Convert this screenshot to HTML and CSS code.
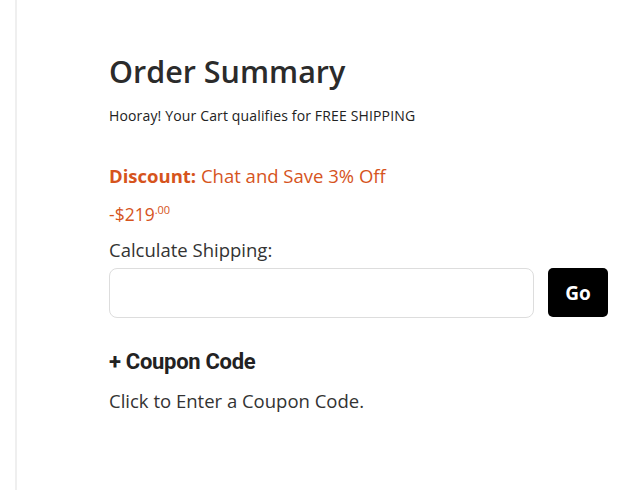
FILE: index.html
```html
<!DOCTYPE html>
<html lang="en">
<head>
  <meta charset="UTF-8">
  <title>Order Summary</title>
  <link rel="stylesheet" href="styles.css">
</head>
<body>

  <div class="summary">
    <h2 class="title">Order Summary</h2>
    <p class="free-ship">Hooray! Your Cart qualifies for FREE SHIPPING</p>

    <p class="discount"><b>Discount:</b> Chat and Save 3% Off</p>
    <p class="discount-amt">-$219<sup>.00</sup></p>

    <label class="ship-label" for="zip">Calculate Shipping:</label>
    <div class="ship-row">
      <input class="ship-input" type="text" id="zip" />
      <button class="go-btn">Go</button>
    </div>

    <div class="coupon-head">+ Coupon Code</div>
    <p class="coupon-text">Click to Enter a Coupon Code.</p>
  </div>

</body>
</html>
```

FILE: styles.css
```css
body { margin: 0; font-family: "Open Sans", Arial, sans-serif; color: #333; background: #fff; }
.summary { margin-left: 15px; border-left: 2px solid #efefef; min-height: 490px; padding: 53px 32px 0 92px; box-sizing: border-box; }
.title { margin: 0; font-size: 30.5px; font-weight: 600; color: #2b2b2b; line-height: 36px; }
.free-ship { margin: 17px 0 0; font-size: 14px; line-height: 20px; color: #222; letter-spacing: 0.15px; }
.discount { margin: 38px 0 0; font-size: 18.5px; line-height: 24px; color: #d6541d; }
.discount b { font-weight: 700; }
.discount-amt { margin: 11px 0 0; font-size: 17.5px; line-height: 22px; color: #d6541d; }
.discount-amt sup { font-size: 11px; }
.ship-label { display: block; margin-top: 13px; font-size: 18.5px; line-height: 24px; color: #333; }
.ship-row { display: flex; gap: 14px; margin-top: 6px; align-items: center; }
.ship-input { flex: 1; height: 50px; box-sizing: border-box; border: 1px solid #ddd; border-radius: 8px; padding: 0 12px; font-size: 16px; }
.go-btn { width: 60px; height: 49px; background: #000; color: #fff; border: none; border-radius: 5px; font-family: "Open Sans", Arial, sans-serif; font-weight: 700; font-size: 19px; cursor: pointer; }
.coupon-head { margin-top: 30px; font-family: Roboto, Arial, sans-serif; font-weight: 700; font-size: 22px; line-height: 28px; color: #222; letter-spacing: -0.3px; }
.coupon-text { margin: 13px 0 0; font-size: 18.5px; line-height: 24px; color: #333; }
```
